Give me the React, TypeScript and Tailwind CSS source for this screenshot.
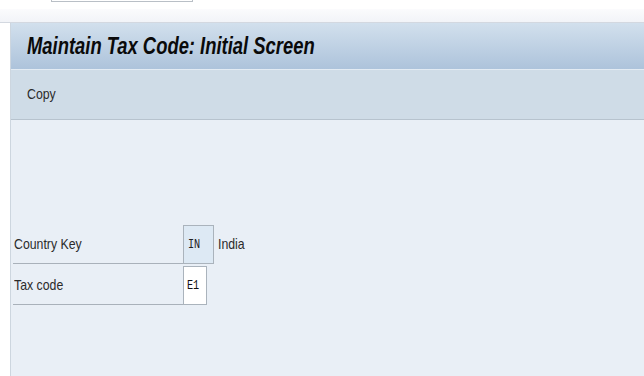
import type { FC } from "react";

const sans = "font-['Liberation_Sans',Arial,sans-serif]";

const App: FC = () => {
  return (
    <div className={`w-[644px] h-[376px] flex flex-col bg-white overflow-hidden ${sans}`}>
      {/* top input stub */}
      <div className="h-[9px] pl-[51px]">
        <div className="w-[142px] h-[2px] border-x border-b border-[#b9bfc6] bg-white" />
      </div>
      <div className="h-[14px] bg-gradient-to-b from-[#fbfbfd] to-[#f2f4f8] border-b border-[#d3d8e0]" />

      <div className="ml-[10px] flex-1 flex flex-col border-l border-[#cdd6df]">
        <div className="h-[47px] flex items-center pl-[16px] bg-gradient-to-b from-[#d2e0ed] to-[#adc3db] border-b border-[#e3ebf3]">
          <h1 className="inline-block origin-left scale-x-[0.8] whitespace-nowrap text-[23px] font-bold italic text-[#0a0a0a]">
            Maintain Tax Code: Initial Screen
          </h1>
        </div>

        <div className="h-[50px] flex items-center pl-[16px] bg-[#cfdce7] border-b border-[#b7c3ce]">
          <span className="inline-block origin-left scale-x-[0.82] text-[15px] text-[#2b2b2b]">Copy</span>
        </div>

        <div className="flex-1 bg-[#e9eff6] pt-[105px] pl-[2px]">
          <div className="flex items-end">
            <div className="w-[170px] h-[38px] flex items-center pl-[1px] border-b border-[#a9b1ba] text-[15px] text-[#2b2b2b]">
              <span className="inline-block origin-left scale-x-[0.82] whitespace-nowrap">Country Key</span>
            </div>
            <div className="w-[31px] h-[39px] flex items-center pl-[4px] bg-[#dde9f4] border border-[#aab3bc] font-['Liberation_Mono',monospace] text-[12px] text-[#222]">
              <span className="inline-block origin-left scale-x-[0.85]">IN</span>
            </div>
            <div className="h-[39px] flex items-center pl-[4px] text-[15px] text-[#2b2b2b]">
              <span className="inline-block origin-left scale-x-[0.82]">India</span>
            </div>
          </div>
          <div className="flex items-end mt-[2px]">
            <div className="w-[170px] h-[38px] flex items-center pl-[1px] border-b border-[#a9b1ba] text-[15px] text-[#2b2b2b]">
              <span className="inline-block origin-left scale-x-[0.82] whitespace-nowrap">Tax code</span>
            </div>
            <div className="w-[24px] h-[39px] flex items-center pl-[3px] bg-white border border-[#aab3bc] font-['Liberation_Mono',monospace] text-[12px] text-[#111]">
              <span className="inline-block origin-left scale-x-[0.85]">E1</span>
            </div>
          </div>
        </div>
      </div>
    </div>
  );
};

export default App;
